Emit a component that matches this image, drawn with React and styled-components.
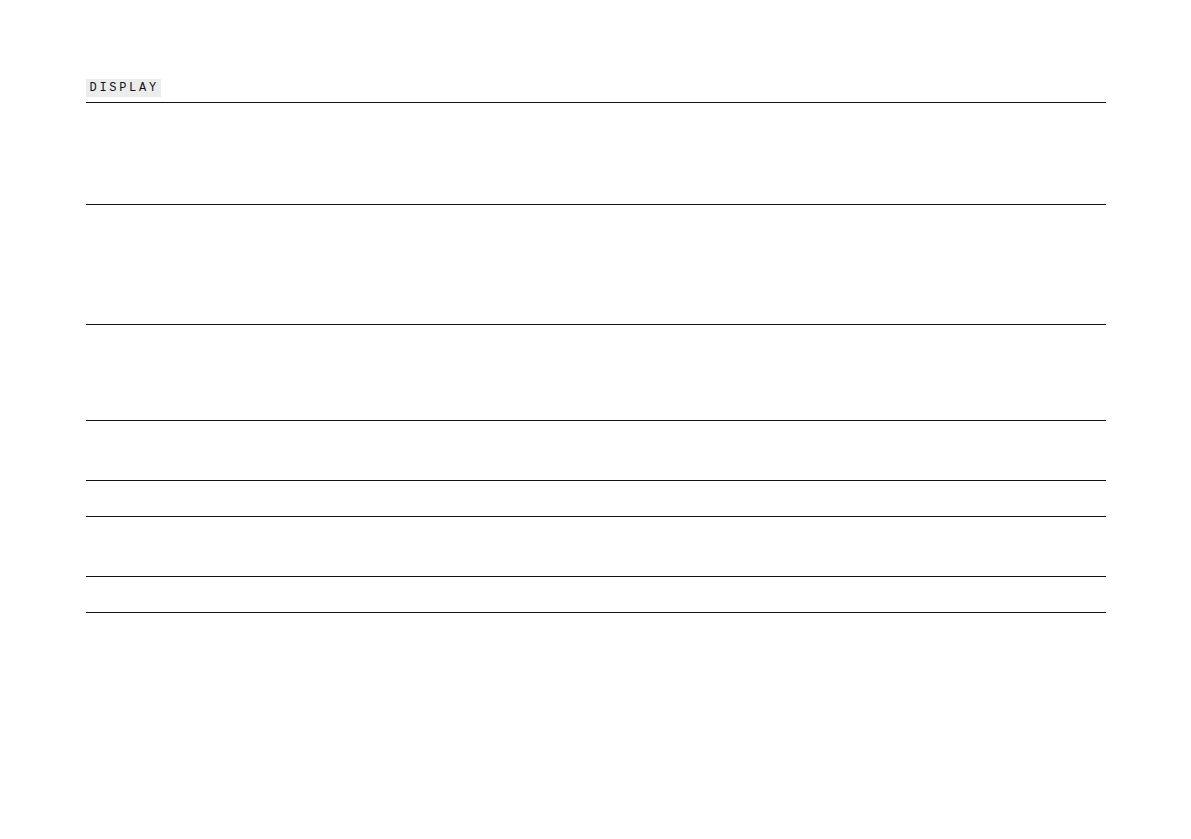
import styled, { createGlobalStyle } from "styled-components";

const GlobalStyle = createGlobalStyle`
  html, body {
    margin: 0;
    padding: 0;
    background: #ffffff;
    font-family: "Liberation Sans", Arial, sans-serif;
  }
`;

const Page = styled.div`
  width: 1020px;
  margin: 0 auto;
  padding-top: 79px;
`;

const Label = styled.div`
  display: flex;
  align-items: center;
  width: fit-content;
  height: 18px;
  padding: 0 2px 0 4px;
  background: #ececec;
  color: #111111;
  font-family: "Liberation Mono", "DejaVu Sans Mono", monospace;
  font-size: 12px;
  line-height: 18px;
  letter-spacing: 2.7px;
  text-transform: uppercase;
  margin-bottom: 5px;
`;

const Table = styled.div`
  border-top: 1px solid #111111;
`;

const Row = styled.div`
  height: ${(p) => p.$h - 1}px;
  border-bottom: 1px solid #111111;
`;

const rows = [102, 120, 96, 60, 36, 60, 36];

export default function App() {
  return (
    <>
      <GlobalStyle />
      <Page>
        <Label>Display</Label>
        <Table>
          {rows.map((h, i) => (
            <Row key={i} $h={h} />
          ))}
        </Table>
      </Page>
    </>
  );
}
